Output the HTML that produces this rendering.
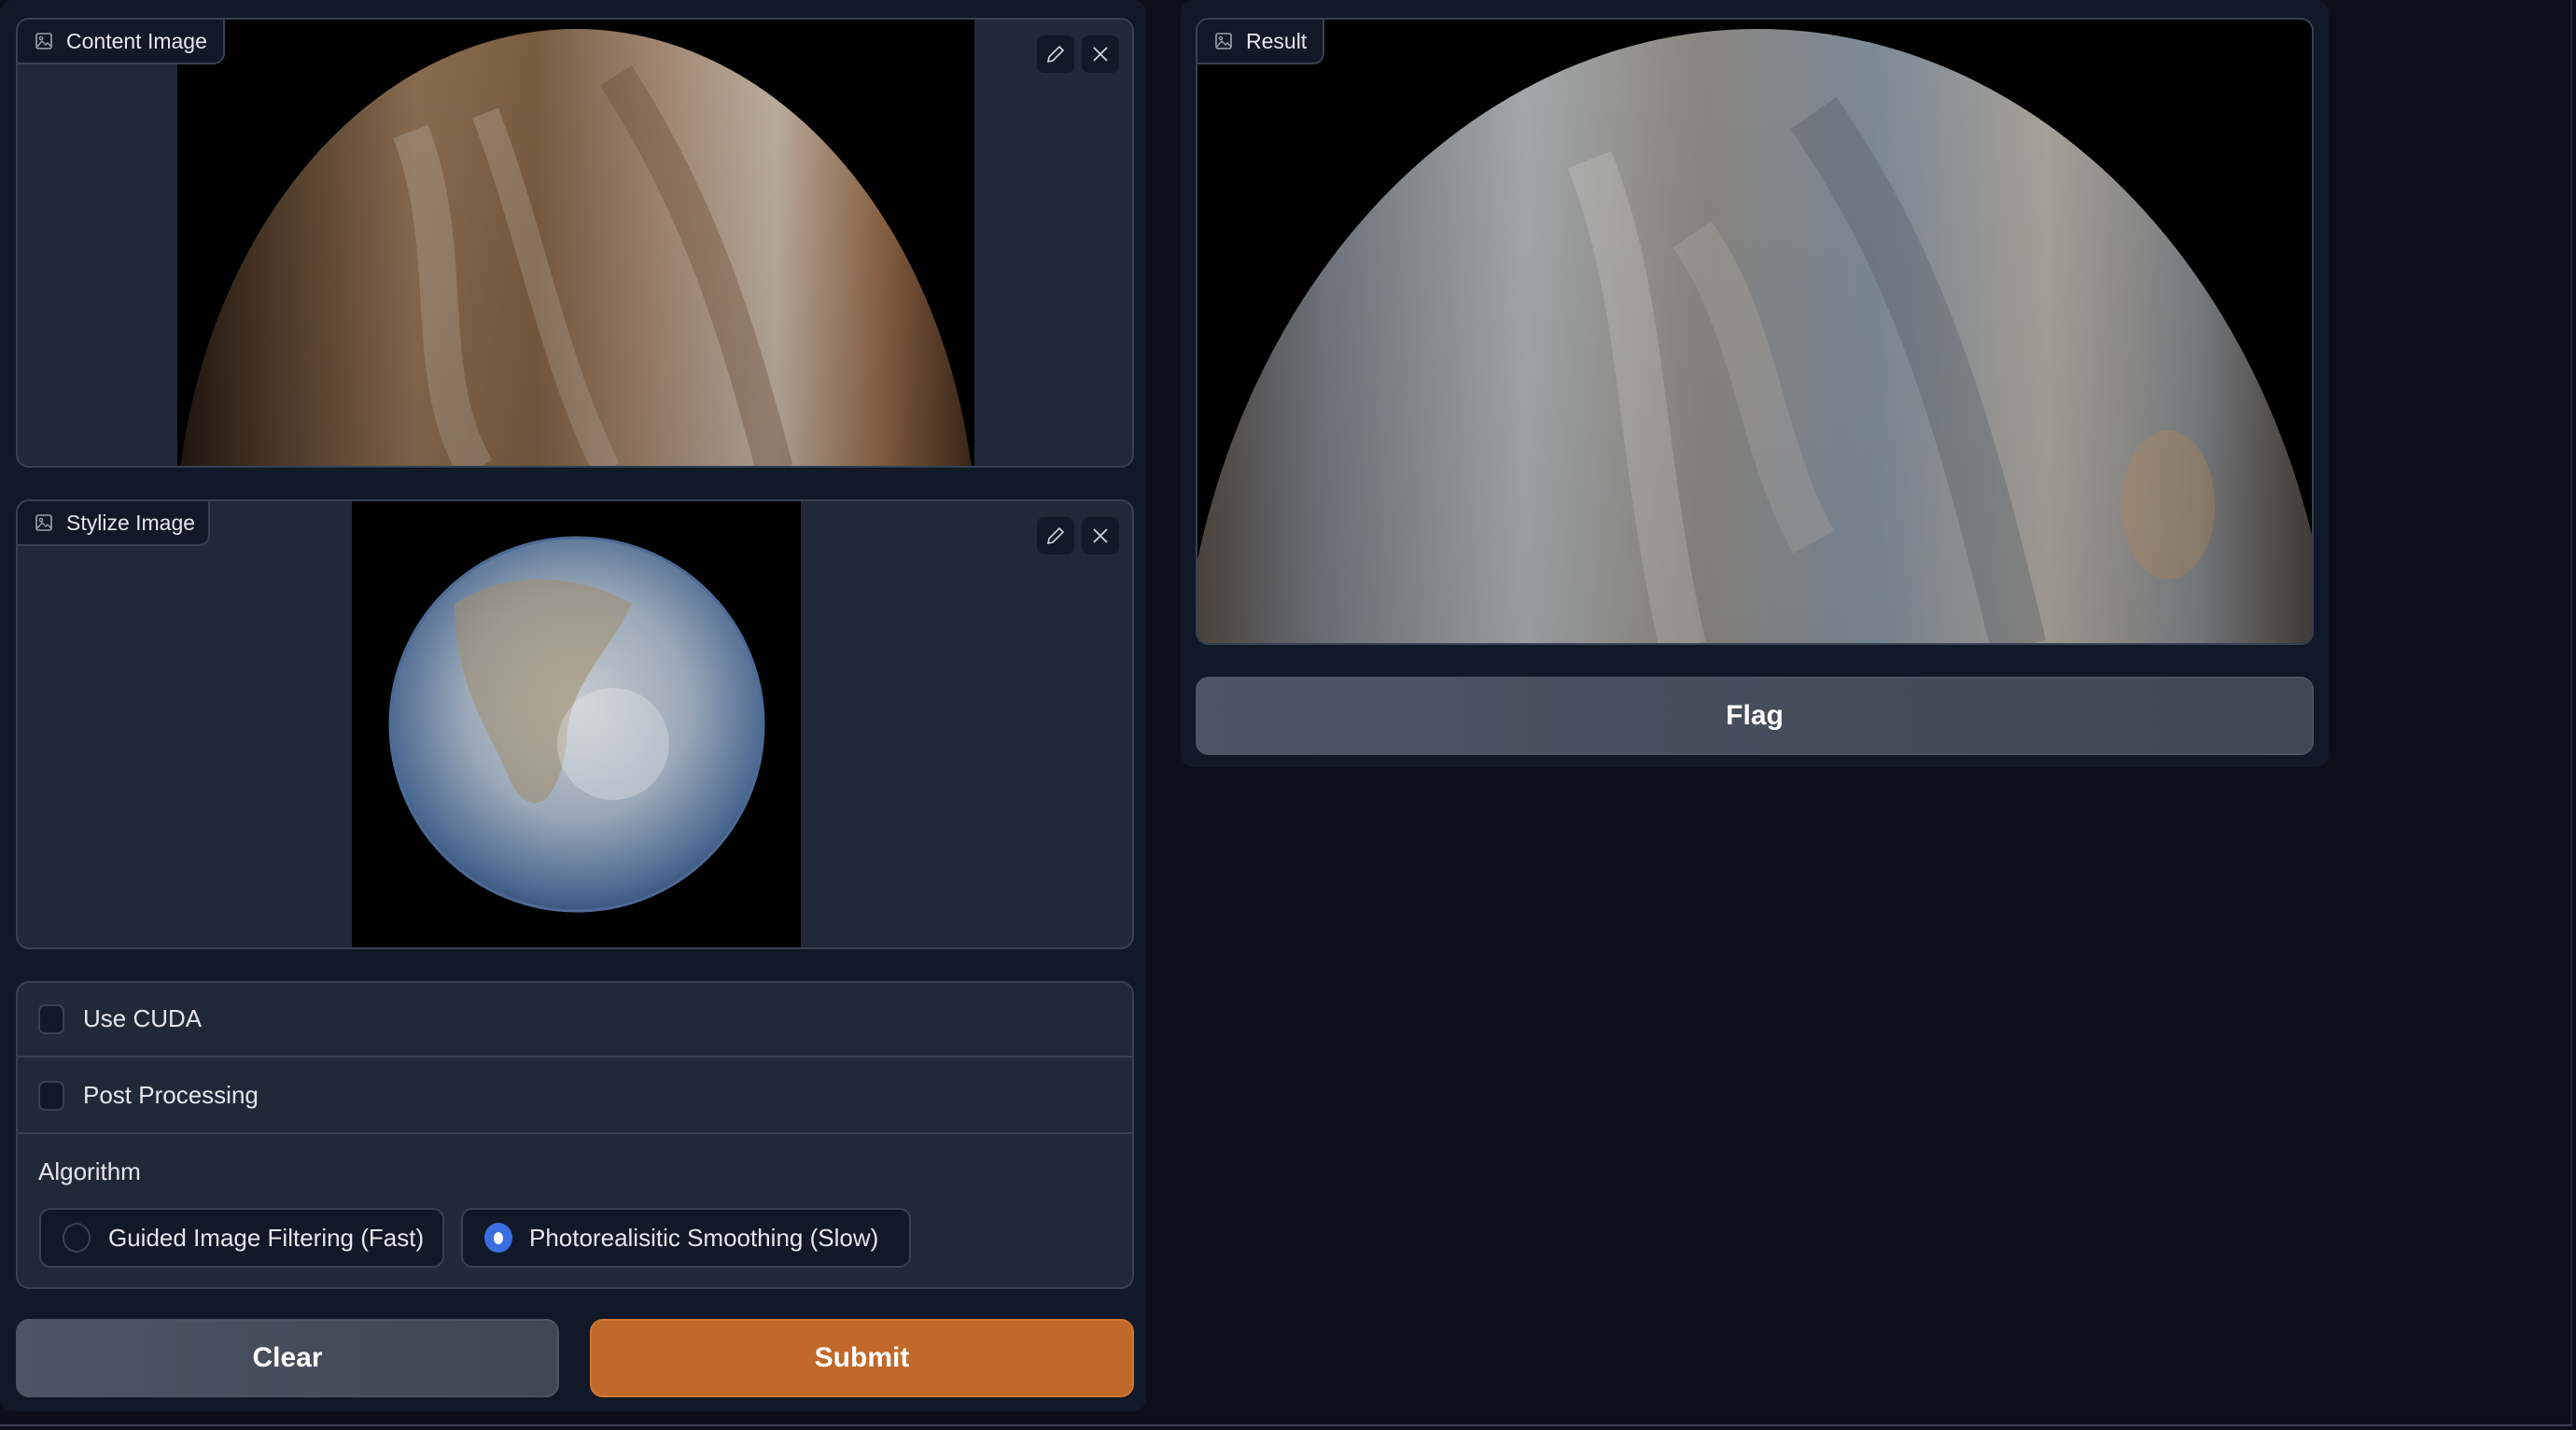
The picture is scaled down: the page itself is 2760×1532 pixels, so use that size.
<!DOCTYPE html>
<html><head><meta charset="utf-8"><style>
*{box-sizing:border-box;margin:0;padding:0}
body{width:2760px;height:1532px;background:#0b0f19;font-family:"Liberation Sans",sans-serif;color:#e5e7eb;position:relative;overflow:hidden}
.abs{position:absolute}
.col{background:#111827;border-radius:14px}
.panel{background:#1f2937;border:2px solid #374151;border-radius:14px;overflow:hidden}
.tab{position:absolute;left:0;top:0;background:#111827;border-right:2px solid #374151;border-bottom:2px solid #374151;border-bottom-right-radius:12px;color:#e5e7eb;font-size:23px;display:flex;align-items:center;padding-left:18px;gap:14px;z-index:2}
.ib{position:absolute;width:40px;height:40px;background:#111827;border-radius:8px;display:flex;align-items:center;justify-content:center;z-index:2}
.btn{position:absolute;border-radius:14px;display:flex;align-items:center;justify-content:center;font-size:30px;font-weight:bold;color:#fff}
.cb{position:absolute;width:28px;height:32px;border:2px solid #374151;background:#111827;border-radius:7px}
.lbl{position:absolute;font-size:26px;color:#e5e7eb}
.radio{position:absolute;height:64px;top:1294px;border:2px solid #374151;background:#111827;border-radius:12px}
</style></head><body>
<svg width="0" height="0" style="position:absolute"><defs>
<symbol id="imgicon" viewBox="0 0 20 20"><rect x="2" y="2" width="16" height="16" rx="2" fill="none" stroke="#9ca3af" stroke-width="1.6"/><circle cx="7" cy="7" r="1.6" fill="none" stroke="#9ca3af" stroke-width="1.3"/><path d="M3 16l5-6 4 4 2-2 4 4" fill="none" stroke="#9ca3af" stroke-width="1.4"/></symbol>
</defs></svg>

<div class="abs col" style="left:0;top:0;width:1228px;height:1512px"></div>
<div class="abs col" style="left:1265px;top:0;width:1230px;height:822px"></div>
<div class="abs" style="left:2754px;top:0;width:2px;height:1528px;background:#1f2937"></div>
<div class="abs" style="left:0;top:1526px;width:2756px;height:2px;background:#374151"></div>

<!-- Content image -->
<div class="abs panel" style="left:17px;top:19px;width:1198px;height:482px">
  <svg class="abs" style="left:171px;top:0" width="854" height="482" viewBox="0 0 854 482">
    <defs>
      <linearGradient id="jg" x1="0" y1="0" x2="1" y2="0">
        <stop offset="0" stop-color="#1e160f"/><stop offset=".12" stop-color="#4e3a28"/>
        <stop offset=".3" stop-color="#8a6c50"/><stop offset=".45" stop-color="#7a5c40"/>
        <stop offset=".6" stop-color="#a08670"/><stop offset=".75" stop-color="#bcae9e"/>
        <stop offset=".88" stop-color="#8e6444"/><stop offset="1" stop-color="#3a2618"/>
      </linearGradient>
      <linearGradient id="jv" x1="0" y1="0" x2="0" y2="1">
        <stop offset="0" stop-color="#000" stop-opacity="0"/><stop offset=".6" stop-color="#000" stop-opacity=".15"/><stop offset="1" stop-color="#000" stop-opacity=".7"/>
      </linearGradient>
    </defs>
    <rect width="854" height="482" fill="#000"/>
    <ellipse cx="427" cy="575" rx="430" ry="565" fill="url(#jg)"/>
    <path d="M250 120 C300 250 260 380 320 482" stroke="#c8beb4" stroke-width="40" fill="none" opacity=".3"/>
    <path d="M330 100 C380 230 400 360 460 482" stroke="#d8ccc0" stroke-width="30" fill="none" opacity=".25"/>
    <path d="M470 60 C560 200 600 330 640 482" stroke="#6b4a30" stroke-width="40" fill="none" opacity=".35"/>
    <ellipse cx="427" cy="575" rx="430" ry="565" fill="url(#jv)"/>
  </svg>
  <div class="tab" style="width:222px;height:48px"><svg width="20" height="20"><use href="#imgicon"/></svg>Content Image</div>
  <div class="ib" style="left:1092px;top:17px"><svg width="22" height="22" viewBox="0 0 22 22"><path d="M15 3l4 4L8 18l-5 1 1-5z" fill="none" stroke="#d1d5db" stroke-width="1.6"/></svg></div>
  <div class="ib" style="left:1140px;top:17px"><svg width="20" height="20" viewBox="0 0 20 20"><path d="M3 3L17 17M17 3L3 17" stroke="#d1d5db" stroke-width="1.8"/></svg></div>
</div>

<!-- Stylize image -->
<div class="abs panel" style="left:17px;top:535px;width:1198px;height:482px">
  <svg class="abs" style="left:358px;top:0" width="481" height="482" viewBox="0 0 481 482">
    <defs>
      <radialGradient id="eg" cx=".5" cy=".45" r=".6">
        <stop offset="0" stop-color="#c8cdd0"/><stop offset=".5" stop-color="#9aa8b8"/><stop offset=".85" stop-color="#4a6890"/><stop offset="1" stop-color="#2a4268"/>
      </radialGradient>
    </defs>
    <rect width="481" height="482" fill="#000"/>
    <circle cx="241" cy="239" r="200" fill="url(#eg)"/>
    <path d="M110 110 C170 70 250 80 300 110 C270 170 230 200 230 260 C220 330 190 340 170 300 C150 250 110 200 110 110Z" fill="#a09070" opacity=".6"/>
    <circle cx="280" cy="260" r="60" fill="#e8ecee" opacity=".35"/>
    <circle cx="241" cy="239" r="200" fill="none" stroke="#4d6a95" stroke-width="3"/>
  </svg>
  <div class="tab" style="width:206px;height:48px"><svg width="20" height="20"><use href="#imgicon"/></svg>Stylize Image</div>
  <div class="ib" style="left:1092px;top:17px"><svg width="22" height="22" viewBox="0 0 22 22"><path d="M15 3l4 4L8 18l-5 1 1-5z" fill="none" stroke="#d1d5db" stroke-width="1.6"/></svg></div>
  <div class="ib" style="left:1140px;top:17px"><svg width="20" height="20" viewBox="0 0 20 20"><path d="M3 3L17 17M17 3L3 17" stroke="#d1d5db" stroke-width="1.8"/></svg></div>
</div>

<!-- options -->
<div class="abs panel" style="left:17px;top:1051px;width:1198px;height:330px"></div>
<div class="abs" style="left:19px;top:1131px;width:1194px;height:2px;background:#374151"></div>
<div class="abs" style="left:19px;top:1213px;width:1194px;height:2px;background:#374151"></div>
<div class="cb" style="left:41px;top:1076px"></div>
<div class="lbl" style="left:89px;top:1076px">Use CUDA</div>
<div class="cb" style="left:41px;top:1158px"></div>
<div class="lbl" style="left:89px;top:1158px">Post Processing</div>
<div class="lbl" style="left:41px;top:1240px">Algorithm</div>
<div class="radio" style="left:42px;width:434px"></div>
<div class="abs" style="left:67px;top:1310px;width:30px;height:32px;border-radius:50%;border:2px solid #374151;background:#111827"></div>
<div class="lbl" style="left:116px;top:1311px">Guided Image Filtering (Fast)</div>
<div class="radio" style="left:494px;width:482px"></div>
<div class="abs" style="left:519px;top:1310px;width:30px;height:32px;border-radius:50%;background:#3b6fe0;display:flex;align-items:center;justify-content:center"><div style="width:10px;height:13px;border-radius:50%;background:#fff"></div></div>
<div class="lbl" style="left:567px;top:1311px">Photorealisitic Smoothing (Slow)</div>

<div class="btn" style="left:17px;top:1413px;width:582px;height:84px;background:linear-gradient(90deg,#4b5563,#3f4654);border:2px solid #4b5563">Clear</div>
<div class="btn" style="left:632px;top:1413px;width:583px;height:84px;background:#c0692a;border:2px solid #d0772f">Submit</div>

<!-- Result -->
<div class="abs panel" style="left:1281px;top:19px;width:1198px;height:672px;background:#000">
  <svg class="abs" style="left:0;top:0" width="1198" height="672" viewBox="0 0 1198 672">
    <defs>
      <linearGradient id="rg" x1="0" y1="0" x2="1" y2="0">
        <stop offset="0" stop-color="#4a3e34"/><stop offset=".12" stop-color="#6d747c"/>
        <stop offset=".3" stop-color="#a4a8aa"/><stop offset=".45" stop-color="#8a8680"/>
        <stop offset=".6" stop-color="#7c8a98"/><stop offset=".75" stop-color="#a8a298"/>
        <stop offset=".88" stop-color="#7a7e82"/><stop offset="1" stop-color="#3a3028"/>
      </linearGradient>
      <linearGradient id="rv" x1="0" y1="0" x2="0" y2="1">
        <stop offset="0" stop-color="#000" stop-opacity="0"/><stop offset=".7" stop-color="#000" stop-opacity=".12"/><stop offset="1" stop-color="#000" stop-opacity=".75"/>
      </linearGradient>
    </defs>
    <ellipse cx="600" cy="770" rx="620" ry="760" fill="url(#rg)"/>
    <path d="M420 150 C480 300 470 450 520 672" stroke="#e0dcd6" stroke-width="50" fill="none" opacity=".25"/>
    <path d="M660 100 C770 260 820 420 880 672" stroke="#4d5560" stroke-width="60" fill="none" opacity=".3"/>
    <path d="M530 230 C600 330 600 450 660 560" stroke="#d4c8bc" stroke-width="50" fill="none" opacity=".2"/>
    <ellipse cx="1040" cy="520" rx="50" ry="80" fill="#c89050" opacity=".3"/>
    <ellipse cx="600" cy="770" rx="620" ry="760" fill="url(#rv)"/>
  </svg>
  <div class="tab" style="width:136px;height:48px"><svg width="20" height="20"><use href="#imgicon"/></svg>Result</div>
</div>
<div class="btn" style="left:1281px;top:725px;width:1198px;height:84px;background:linear-gradient(90deg,#4b5563,#3f4654);border:2px solid #4b5563">Flag</div>
</body></html>
